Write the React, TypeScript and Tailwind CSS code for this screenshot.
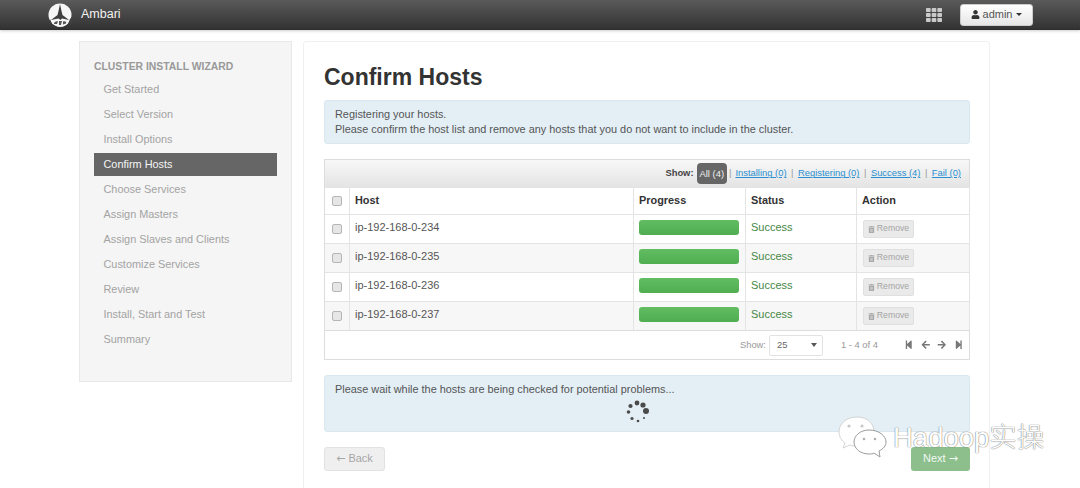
import { FaArrowLeft, FaArrowRight, FaStepBackward, FaStepForward, FaTh, FaTrashAlt, FaUser } from "react-icons/fa";

const steps = [
  "Get Started",
  "Select Version",
  "Install Options",
  "Confirm Hosts",
  "Choose Services",
  "Assign Masters",
  "Assign Slaves and Clients",
  "Customize Services",
  "Review",
  "Install, Start and Test",
  "Summary",
];

const hosts = ["ip-192-168-0-234", "ip-192-168-0-235", "ip-192-168-0-236", "ip-192-168-0-237"];

const filters = ["Installing (0)", "Registering (0)", "Success (4)", "Fail (0)"];

const Checkbox = () => (
  <span className="block w-[10px] h-[10px] rounded-[2px] border border-[#b5b5b5] bg-[#e6e6e6]" />
);

const Logo = () => (
  <svg width="25" height="24" viewBox="0 0 25 24">
    <circle cx="12" cy="12" r="11.5" fill="#f6f6f6" />
    <path d="M12 1 L13.5 8 L14.5 12 L21 17 L14 15.5 L12.5 17 L10.5 15.5 L3 17 L9.5 12 L10.5 8 Z" fill="#3f3f3f" />
    <path d="M3 17 C5 21 8 24 12 24 C17 24 20 21 22 17 L18 18.5 L15 17 L9 17 L6 18.5 Z" fill="#f6f6f6" />
    <path d="M6 21 C6 19 8 18 10 18.5 L9 21 Z M11 18 L14 18 L13 22 L11 22 Z M15 18.5 C17 18 19 19 18 20.5 L15 21.5 Z" fill="#555" />
    <path d="M2 16 L4 21 L1 21 Z M22 16 L24 14 L24 21 L20 21 Z" fill="#3f3f3f" />
  </svg>
);

const Spinner = () => (
  <svg width="26" height="24" viewBox="0 0 26 24" fill="#4a4a4a">
    <circle cx="13" cy="3" r="2.4" />
    <circle cx="19" cy="5" r="2.6" />
    <circle cx="22" cy="11" r="3" />
    <circle cx="20" cy="18" r="1" />
    <circle cx="14" cy="21" r="1.3" />
    <circle cx="8" cy="18.5" r="1.6" />
    <circle cx="4.5" cy="12" r="1.8" />
    <circle cx="6.5" cy="6" r="2.1" />
  </svg>
);

const Watermark = () => (
  <div className="absolute left-[838px] top-[416px] flex items-center">
    <svg width="50" height="44" viewBox="0 0 50 44">
      <path d="M19 1 C8 1 1 8 1 16 C1 21 4 25 7 27 L5 32 L12 29 C14 30 17 30 19 30 C30 30 36 24 36 16 C36 8 30 1 19 1 Z" fill="#fff" stroke="#d4d4d4" />
      <path d="M31 14 C22 14 16 20 16 26 C16 33 23 38 31 38 C33 38 35 38 36 37 L42 41 L41 35 C45 33 48 30 48 26 C48 20 41 14 31 14 Z" fill="#fff" stroke="#9a9a9a" />
      <circle cx="11" cy="10" r="1.6" fill="#c8c8c8" />
      <circle cx="24" cy="10" r="1.6" fill="#c8c8c8" />
      <circle cx="26" cy="23" r="1.3" fill="#b0b0b0" />
      <circle cx="37" cy="23" r="1.3" fill="#b0b0b0" />
    </svg>
    <span
      className="ml-[5px] text-[27.5px] leading-none text-white font-['Liberation_Sans','Noto_Sans_CJK_SC',sans-serif] font-light"
      style={{ textShadow: "0 0 1px #777, 0 0 1px #777" }}
    >
      Hadoop实操
    </span>
  </div>
);

const App = () => {
  return (
    <div className="relative h-[488px] w-[1080px] overflow-hidden bg-white font-['Liberation_Sans',Arial,sans-serif] text-[#333]">
      <header className="h-[30px] bg-gradient-to-b from-[#5a5a5a] to-[#333333] border-b border-[#2d2d2d] shadow-[0_1px_3px_rgba(0,0,0,0.2)] flex items-center pl-[48px] pr-[47px]">
        <Logo />
        <span className="ml-[8px] text-[12.5px] text-[#f2f2f2]">Ambari</span>
        <FaTh className="ml-auto text-[#c9c9c9] text-[16px]" />
        <button className="ml-[18px] w-[73px] h-[22px] rounded-[3px] bg-gradient-to-b from-white to-[#e6e6e6] border border-[#ccc] flex items-center justify-center gap-[3px] text-[11px] text-[#555]">
          <FaUser className="text-[9px] text-[#333]" />
          admin
          <span className="ml-[1px] w-0 h-0 border-x-[3px] border-x-transparent border-t-[3px] border-t-[#333]" />
        </button>
      </header>

      <div className="flex items-start gap-[11px] pl-[79px] pt-[11px]">
        <aside className="w-[213px] h-[341px] bg-[#f5f5f5] border border-[#e8e8e8] pt-[19px] pl-[14px] pr-[14px]">
          <h2 className="h-[12px] leading-[12px] text-[10.4px] font-bold text-[#999] uppercase tracking-[0]">Cluster Install Wizard</h2>
          <ul className="mt-[4px]">
            {steps.map((step) =>
              step === "Confirm Hosts" ? (
                <li key={step} className="h-[23px] my-[1px] pl-[9.5px] bg-[#666] text-[#f5f5f5] text-[10.9px] leading-[23px]">
                  {step}
                </li>
              ) : (
                <li key={step} className="h-[25px] pl-[9.5px] text-[#a3a3a3] text-[10.9px] leading-[25px]">
                  {step}
                </li>
              )
            )}
          </ul>
        </aside>

        <main className="w-[687px] h-[460px] border border-[#f0f0f0] rounded-[3px] px-[20px] pt-[20px]">
          <h1 className="h-[30px] text-[23px] leading-[30px] font-bold text-[#333]">Confirm Hosts</h1>

          <div className="mt-[8px] h-[44px] w-[646px] bg-[#e3eff5] border border-[#d9e8f0] rounded-[3px] px-[10px] pt-[6px] text-[10.9px] leading-[15px] text-[#555]">
            <p>Registering your hosts.</p>
            <p>Please confirm the host list and remove any hosts that you do not want to include in the cluster.</p>
          </div>

          <section className="mt-[15px] w-[646px] border border-[#ddd]">
            <div className="h-[27px] bg-gradient-to-b from-[#f8f8f8] to-[#e4e4e4] flex items-center justify-end pr-[8px] text-[9.4px] text-[#999]">
              <span className="font-bold text-[#444] mr-[3px]">Show:</span>
              <span className="h-[21px] px-[3px] leading-[21px] rounded-[4px] bg-[#666] text-[#eee] mr-[1px]">All (4)</span>
              {filters.map((f, i) => (
                <span key={f} className="flex items-center">
                  {i > 0 && <span className="mx-[4.5px]">|</span>}
                  {i === 0 && <span className="ml-[1px] mr-[4px]">|</span>}
                  <a className="text-[#2a8fd0] underline">{f}</a>
                </span>
              ))}
            </div>

            <div className="grid grid-cols-[24px_284px_112px_111px_113px] border-r border-[#e4e4e4] w-[645px]">
              <div className="h-[27px] flex items-center justify-center border-t border-[#e4e4e4]"><Checkbox /></div>
              <div className="h-[27px] pl-[5px] leading-[24px] text-[10.9px] font-bold border-t border-l border-[#e4e4e4]">Host</div>
              <div className="h-[27px] pl-[5px] leading-[24px] text-[10.9px] font-bold border-t border-l border-[#e4e4e4]">Progress</div>
              <div className="h-[27px] pl-[5px] leading-[24px] text-[10.9px] font-bold border-t border-l border-[#e4e4e4]">Status</div>
              <div className="h-[27px] pl-[5px] leading-[24px] text-[10.9px] font-bold border-t border-l border-[#e4e4e4]">Action</div>

              {hosts.map((host, i) => {
                const bg = i % 2 === 1 ? "bg-[#f7f7f7]" : "bg-white";
                return (
                  <div key={host} className="contents">
                    <div className={`h-[29px] flex items-center justify-center border-t border-[#e4e4e4] ${bg}`}><Checkbox /></div>
                    <div className={`h-[29px] pl-[5px] pt-[4px] leading-[16px] text-[11px] text-[#555] border-t border-l border-[#e4e4e4] ${bg}`}>{host}</div>
                    <div className={`h-[29px] pl-[5px] pt-[5px] border-t border-l border-[#e4e4e4] ${bg}`}>
                      <div className="w-[100px] h-[15px] rounded-[3px] bg-gradient-to-b from-[#62bd62] to-[#50ad50]" />
                    </div>
                    <div className={`h-[29px] pl-[5px] pt-[4px] leading-[16px] text-[11px] text-[#468847] border-t border-l border-[#e4e4e4] ${bg}`}>Success</div>
                    <div className={`h-[29px] pl-[6px] pt-[5px] border-t border-l border-[#e4e4e4] ${bg}`}>
                      <button className="w-[51px] h-[18px] rounded-[2px] bg-[#eaeaea] border border-[#e0e0e0] flex items-center justify-center gap-[2px] text-[8.7px] text-[#a5a5a5]">
                        <FaTrashAlt className="text-[7px]" />
                        Remove
                      </button>
                    </div>
                  </div>
                );
              })}
            </div>

            <div className="h-[29px] border-t border-[#ddd] flex items-center justify-end pr-[6px] text-[9.4px] text-[#999]">
              <span>Show:</span>
              <div className="ml-[3px] w-[54px] h-[21px] border border-[#e2e2e2] rounded-[2px] flex items-center justify-between pl-[7px] pr-[5px] text-[#666]">
                <span>25</span>
                <span className="w-0 h-0 border-x-[3px] border-x-transparent border-t-[4px] border-t-[#555]" />
              </div>
              <span className="ml-[18px] mr-[26px]">1 - 4 of 4</span>
              <div className="flex items-center gap-[7px] text-[#777] text-[9.5px]">
                <FaStepBackward />
                <FaArrowLeft />
                <FaArrowRight />
                <FaStepForward />
              </div>
            </div>
          </section>

          <div className="mt-[15px] h-[57px] w-[646px] bg-[#e3eff5] border border-[#d9e8f0] rounded-[3px] px-[10px] pt-[6px] text-[10.9px] leading-[15px] text-[#555]">
            <p>Please wait while the hosts are being checked for potential problems...</p>
            <div className="flex justify-center mt-[3px] pr-[20px]"><Spinner /></div>
          </div>

          <div className="mt-[15px] w-[646px] flex justify-between">
            <button className="w-[61px] h-[24px] rounded-[3px] bg-[#efefef] border border-[#e2e2e2] text-[11px] text-[#a6a6a6]"><span className="font-['DejaVu_Sans']">←</span> Back</button>
            <button className="w-[59px] h-[24px] rounded-[3px] bg-[#8cbf8c] text-[11px] text-[#f2f8f2]">Next <span className="font-['DejaVu_Sans']">→</span></button>
          </div>
        </main>
      </div>

      <Watermark />
    </div>
  );
};

export default App;
